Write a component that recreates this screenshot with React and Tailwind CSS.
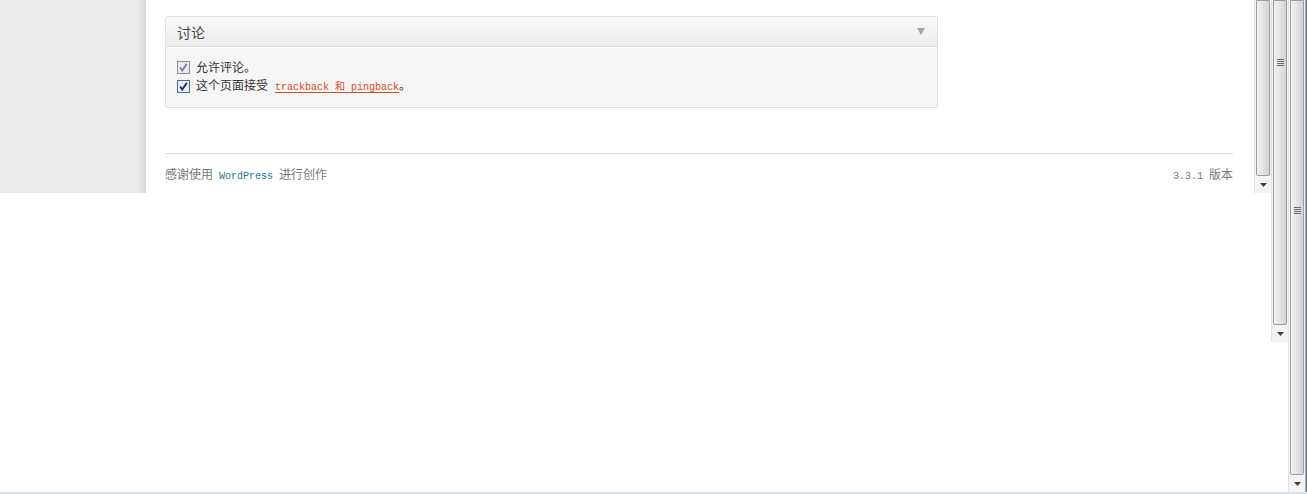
import React from 'react';

const cjk = { fontFamily: '"Noto Sans CJK SC", "Liberation Sans", sans-serif' };
const mono = { fontFamily: '"Liberation Mono", "Noto Sans CJK SC", monospace' };

function Check({ muted }) {
  return (
    <svg width="13" height="13" viewBox="0 0 13 13" className="shrink-0">
      <rect x="0.5" y="0.5" width="12" height="12" fill={muted ? '#e4e4e4' : '#dbe8f3'} stroke={muted ? '#8f8f8f' : '#4d6f8f'} />
      <rect x="1.5" y="1.5" width="10" height="10" fill={muted ? '#ececec' : '#e8f1f9'} />
      <path d="M3.2 6.4 L5.3 9.6 L9.8 2.8" fill="none" stroke={muted ? '#6d7fa6' : '#1c2a6b'} strokeWidth="1.8" />
    </svg>
  );
}

function Scrollbar({ height, thumb, grip }) {
  return (
    <div className="w-[17px] shrink-0 flex flex-col bg-[#f0f0f0] border-l border-[#e3e3e3]" style={{ height }}>
      <div className="relative flex-1 mx-[1px] border border-[#9d9d9d] rounded-b-[2px] bg-gradient-to-r from-[#f2f2f2] via-[#e3e3e3] to-[#d4d4d4]" style={{ maxHeight: thumb }}>
        {grip && (
          <div className="absolute left-[3px] flex flex-col gap-[1px]" style={{ top: grip }}>
            <div className="w-[7px] h-[1px] bg-[#6b6b6b]" />
            <div className="w-[7px] h-[1px] bg-[#6b6b6b]" />
            <div className="w-[7px] h-[1px] bg-[#6b6b6b]" />
            <div className="w-[7px] h-[1px] bg-[#6b6b6b]" />
          </div>
        )}
      </div>
      <div className="h-[17px] shrink-0 flex items-center justify-center bg-[#f3f3f3]">
        <svg width="7" height="4" viewBox="0 0 7 4"><path d="M0 0 H7 L3.5 4 Z" fill="#404040" /></svg>
      </div>
    </div>
  );
}

export default function App() {
  return (
    <div className="w-[1307px] h-[494px] flex bg-white overflow-hidden border-b-2 border-[#dde3ea]" style={cjk}>
      <div className="w-[1254px] shrink-0 flex flex-col">
        <div className="h-[193px] flex">
          <div className="w-[146px] shrink-0 bg-gradient-to-r from-[#ececec] from-[93%] to-[#d8d8d8]" />
          <div className="flex-1 bg-white pl-[19px] pr-[21px] pt-[16px] flex flex-col">
            <div className="w-[773px] border border-[#dfdfdf] rounded-[3px] bg-[#f5f5f5]">
              <div className="h-[30px] flex items-center justify-between px-[11px] bg-gradient-to-b from-[#f9f9f9] to-[#ececec] border-b border-[#dfdfdf] rounded-t-[3px]">
                <span className="text-[14px] text-[#464646] leading-none">讨论</span>
                <svg width="8" height="7" viewBox="0 0 8 7" className="mr-[1px]"><path d="M0 0 H8 L4 7 Z" fill="#a7a7a7" /></svg>
              </div>
              <div className="border-t border-white px-[11px] pt-[10px] pb-[10px] text-[12px] text-[#333] leading-[18px]">
                <div className="flex items-center gap-[6px]">
                  <Check muted />
                  <span>允许评论。</span>
                </div>
                <div className="flex items-center gap-[6px]">
                  <Check />
                  <span>
                    这个页面接受
                    <span className="ml-[7px] text-[10px] text-[#d54e21] underline underline-offset-2" style={mono}>trackback 和 pingback</span>
                    。
                  </span>
                </div>
              </div>
            </div>
            <div className="mt-[45px] border-t border-[#dfdfdf] pt-[11px] flex justify-between text-[12px] text-[#777] leading-[18px]">
              <span>
                感谢使用
                <span className="mx-[6px] text-[10px] text-[#21759b]" style={mono}>WordPress</span>
                进行创作
              </span>
              <span>
                <span className="mr-[6px] text-[10px]" style={mono}>3.3.1</span>
                版本
              </span>
            </div>
          </div>
        </div>
        <div className="flex-1 bg-white" />
      </div>
      <Scrollbar height={193} thumb={176} />
      <div className="flex flex-col">
        <Scrollbar height={342} thumb={325} grip={58} />
        <div className="flex-1 bg-white" />
      </div>
      <Scrollbar height={492} thumb={475} grip={206} />
      <div className="w-[2px] shrink-0 bg-gradient-to-r from-[#c9d4de] to-[#3f5468]" />
    </div>
  );
}
